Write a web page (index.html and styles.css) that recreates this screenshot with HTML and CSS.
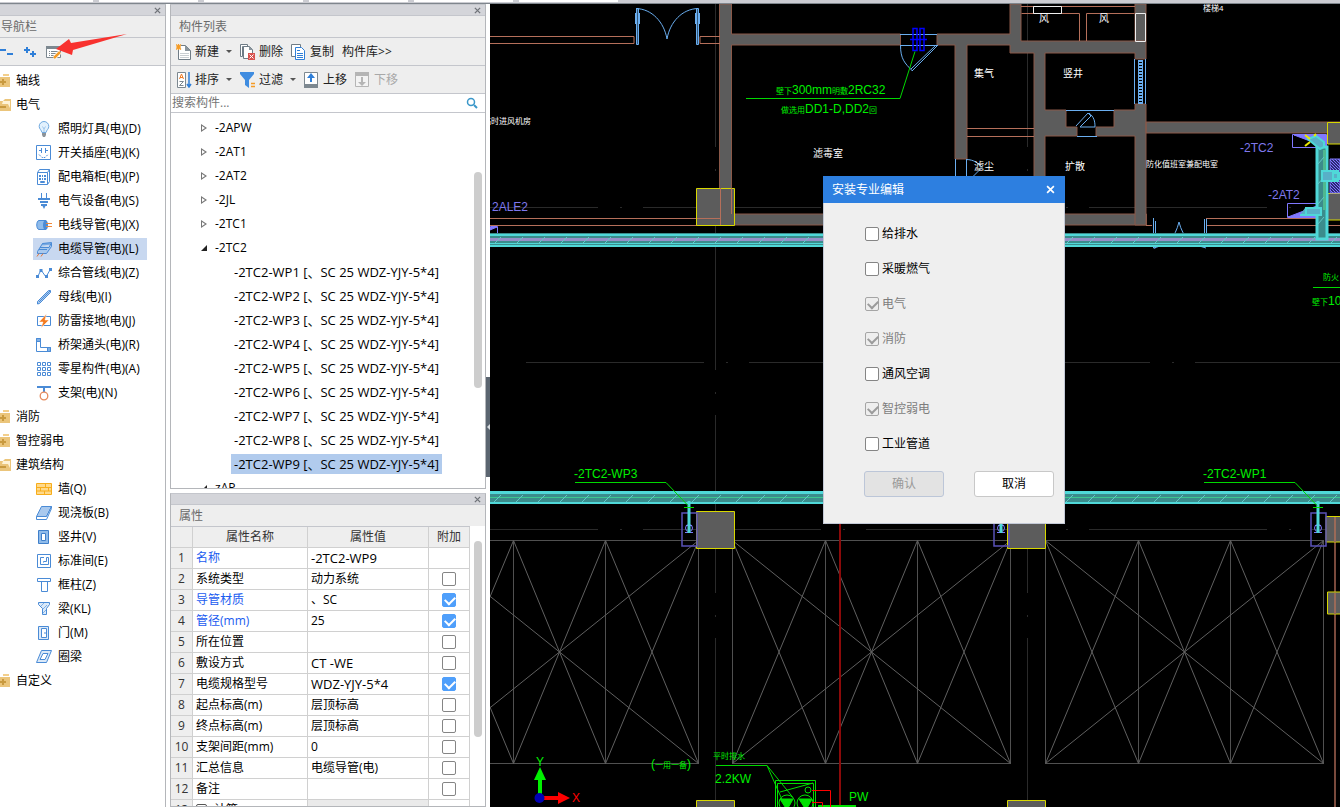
FILE: index.html
```
<!DOCTYPE html>
<html lang="zh-CN">

<head>
    <meta charset="UTF-8">
    <meta name="viewport" content="width=device-width, initial-scale=1.0">
    <title>安装专业编辑</title>
    <link rel="stylesheet" href="styles.css">
</head>

<body>

    <!-- icon set -->
    <svg class="defs" aria-hidden="true">
        <symbol id="i-folder" viewBox="0 0 16 16">
            <path fill="#f3cf8c" d="M8 1h6v2H8z" />
            <path fill="#ebc57b" d="M0 4h15v10H0z" />
            <path stroke="#c99a3f" stroke-width="2" d="M5 9h6M8 6v6" />
        </symbol>
        <symbol id="i-folder-open" viewBox="0 0 16 16">
            <path fill="#ebc57b" d="M0 4h8l2-2h6v12H0z" />
            <path fill="#fff3d6" d="M8 4h7v7l-2-4H7z" />
            <path stroke="#c99a3f" stroke-width="2" d="M5 10h6" />
        </symbol>
        <symbol id="i-lamp" viewBox="0 0 16 16">
            <path fill="#e2f1fd" stroke="#6ea8df" d="M8 .5a4.8 4.8 0 0 0-4.8 5C3.200 8 5.500 9 6 11.500h4C10.500 9 12.800 8 12.800 5.500A4.800 4.800 0 0 0 8 .5z" />
            <path fill="none" stroke="#9fc6ec" d="M6.500 5.500 8 8l1.500-2.500M8 8v3" />
            <path fill="#8c9399" d="M6 12h4v2l-1 2H7l-1-2z" />
        </symbol>
        <symbol id="i-socket" viewBox="0 0 16 16">
            <path fill="#fff" stroke="#4a8bd6" d="M.5.500h14v14H.5z" />
            <path fill="none" stroke="#4a8bd6" d="M3 5.500h2M5.500 3v5M9.500 3v5M10 5.500h2" />
            <path fill="none" stroke="#4a8bd6" stroke-dasharray="2 1" d="M3 9.500l3 3h3l3-3" />
        </symbol>
        <symbol id="i-box" viewBox="0 0 16 16">
            <path fill="#fff" stroke="#4a8bd6" d="M1.500 3.500h10v12h-10zM1.500 3.500l2-3h10v12l-2 3M11.500 3.500l2-3" />
            <path fill="#4a8bd6" d="M3 6h2v2H3zM6 6h1v2H6zM8 6h2v2H8zM3 9h2v2H3zM6 9h1v2H6zM8 9h2v2H8z" />
            <path fill="#fff" stroke="#4a8bd6" d="M4.500 12.500h4v1h-4z" />
        </symbol>
        <symbol id="i-device" viewBox="0 0 16 16">
            <path fill="none" stroke="#4a8bd6" d="M5.500 0v5M10.500 0v5" />
            <path stroke="#4a8bd6" stroke-width="2" d="M2 6h12M4 9h8M5 12h6" />
            <path fill="#4a8bd6" d="M6 12h4l-2 4z" />
        </symbol>
        <symbol id="i-wire" viewBox="0 0 16 16">
            <path fill="#8fbbea" stroke="#4a8bd6" d="M3 3.500h7v9H3C0 12.500 0 3.500 3 3.500z" />
            <ellipse cx="9.500" cy="8" rx="2.500" ry="4.500" fill="#4a8bd6" />
            <path stroke="#f08a3c" d="M10 6.500h6M10 9.500h6" />
        </symbol>
        <symbol id="i-tray" viewBox="0 0 16 16">
            <path fill="#a9c9ee" stroke="#4a8bd6" d="M1.500 10.500 6.500 2.500 15.500 1.500v4l-5 7h-9zM6 3h9M4 6.500h9l2-4M3 8.500h8" />
            <path stroke="#e0763a" d="M1 15.500l2-3M5 15.500l2-3" />
        </symbol>
        <symbol id="i-poly" viewBox="0 0 16 16">
            <path fill="none" stroke="#4a8bd6" d="M1.500 12 5 5l5 7 4.500-8" />
            <path fill="#4a8bd6" d="M0 10h3v3H0zM3.500 4h3v3h-3zM9 10h3v3H9zM13 3h3v3h-3z" />
        </symbol>
        <symbol id="i-bus" viewBox="0 0 16 16">
            <path fill="#a9c9ee" stroke="#4a8bd6" d="M1.500 12.500l11-11h2v2l-11 11-2 .5z" />
            <path stroke="#4a8bd6" d="M3 13 14 2" />
        </symbol>
        <symbol id="i-bolt" viewBox="0 0 16 16">
            <path fill="#fff" stroke="#4a8bd6" d="M1.500 3.500h13v9h-13z" />
            <path fill="#f47b20" stroke="#fff" stroke-width=".5" d="M10.500 1 3 9h4l-2 6 8-8H9z" />
        </symbol>
        <symbol id="i-elbow" viewBox="0 0 16 16">
            <path fill="#fff" stroke="#4a8bd6" d="M.5 1.500h4v9h10v4H.5z" />
            <path fill="#7fb0e6" stroke="#4a8bd6" d="M.5 1.500h4v3h-4zM11.500 10.500h3v4h-3z" />
        </symbol>
        <symbol id="i-grid" viewBox="0 0 16 16">
            <path fill="#fff" stroke="#4a8bd6" d="M1.500 1.500h3v3h-3zM6.500 1.500h3v3h-3zM11.500 1.500h3v3h-3zM1.500 6.500h3v3h-3zM6.500 6.500h3v3h-3zM11.500 6.500h3v3h-3zM1.500 11.500h3v3h-3zM6.500 11.500h3v3h-3zM11.500 11.500h3v3h-3z" />
        </symbol>
        <symbol id="i-hanger" viewBox="0 0 16 16">
            <path stroke="#4a8bd6" stroke-width="2" d="M1 2h14M8 2v5" />
            <circle cx="8" cy="11" r="3.800" fill="#fff" stroke="#e58a5c" stroke-width="1.300" />
        </symbol>
        <symbol id="i-wall" viewBox="0 0 16 16">
            <path fill="#ffd98a" stroke="#f7ad1b" d="M.5 2.500h15v11H.5z" />
            <path stroke="#f7ad1b" d="M0 6.500h16M0 10h16M9.500 3v3M4.500 7v3M12.500 7v3M8.500 10v3" />
        </symbol>
        <symbol id="i-slab" viewBox="0 0 16 16">
            <path fill="#a9c9ee" stroke="#4a8bd6" d="M5.500 1.500h10l-5 10h-10z" />
            <path fill="#fff" stroke="#4a8bd6" d="M.5 11.500h10l5-10v2l-5 11h-10z" />
        </symbol>
        <symbol id="i-shaft" viewBox="0 0 16 16">
            <path fill="#8fbbea" stroke="#3f7fca" d="M2.500 1.500h10v13h-10z" />
            <path fill="#fff" stroke="#3f7fca" d="M5.500 4.500h4v7h-4z" />
        </symbol>
        <symbol id="i-room" viewBox="0 0 16 16">
            <path fill="#fff" stroke="#4a8bd6" d="M1.500 1.500h13v13h-13zM8 4.500H4.500v7h8v-7h-2v4h-3v1" />
        </symbol>
        <symbol id="i-column" viewBox="0 0 16 16">
            <path fill="#fff" stroke="#4a8bd6" d="M1.500 1.500h13v3h-3v10h-6v-10h-4z" />
            <path stroke="#4a8bd6" d="M5 4.500h7" />
        </symbol>
        <symbol id="i-beam" viewBox="0 0 16 16">
            <path fill="#dbe9f8" stroke="#4a8bd6" d="M2.500 1.500h11v2l-3 4v6h-4v-6l-4-4z" />
            <path stroke="#7fb0e6" d="M5 5l3-3M7 8l4-4M7 12l3-3" />
        </symbol>
        <symbol id="i-door" viewBox="0 0 16 16">
            <path fill="#dbe9f8" stroke="#4a8bd6" d="M2.500 1.500h10v13h-10z" />
            <path fill="#fff" stroke="#4a8bd6" d="M5.500 3.500h5v9h-5zM8 8h2" />
        </symbol>
        <symbol id="i-ring" viewBox="0 0 16 16">
            <path fill="#dbe9f8" stroke="#4a8bd6" d="M5.500 1.500h10l-5 12h-10z" />
            <path fill="#fff" stroke="#4a8bd6" d="M7 4.500h5l-3 6H4z" />
        </symbol>
        <symbol id="i-minus" viewBox="0 0 16 16">
            <path stroke="#2f7fd8" stroke-width="2" d="M0 6h6M7 10h6" />
        </symbol>
        <symbol id="i-plus" viewBox="0 0 16 16">
            <path stroke="#2f7fd8" stroke-width="2" d="M1 6h6M4 3v6M7 10h6M10 7v6" />
        </symbol>
        <symbol id="i-edit" viewBox="0 0 16 16">
            <path fill="#fff" stroke="#7d8890" d="M.5 2.500h14v11H.5z" />
            <path fill="#7d8890" d="M0 2h15v3H0z" />
            <path stroke="#7d8890" stroke-dasharray="1 1 7 9" d="M3 7.500h10M3 9.500h10M3 11.500h10" />
            <path stroke="#fff" stroke-width="4" d="M8 14l6-6" />
            <path stroke="#f59b25" stroke-width="2.500" d="M8 14l6-6" />
        </symbol>
        <symbol id="i-new" viewBox="0 0 16 16">
            <path fill="#fff" stroke="#6f7c86" d="M2.500 1.500h7l5 5v9h-12z" />
            <path fill="#8a959d" d="M9 1l6 6H9z" />
            <path stroke="#c9ced2" d="M4 9.500h9M4 11.500h9M4 13.500h9" />
            <path stroke="#eee" stroke-width="6" d="M0 3h5" />
            <path stroke="#f59b25" stroke-width="1.200" d="M0 .5l5 5M5 .5l-5 5M2.500 0v6M0 3h5" />
        </symbol>
        <symbol id="i-del" viewBox="0 0 16 16">
            <path fill="#fff" stroke="#6f7c86" d="M.5.500h7v2h-5v10h-2z" />
            <path fill="#fff" stroke="#6f7c86" d="M3.500 2.500h6l3 3v9h-9z" />
            <path fill="#8a959d" d="M9 2l4 4H9z" />
            <path fill="#d9534f" d="M8 9h7v7H8z" />
            <path stroke="#fff" d="M9.500 10.500l4 4M13.500 10.500l-4 4" />
        </symbol>
        <symbol id="i-copy" viewBox="0 0 16 16">
            <path fill="#fff" stroke="#6f7c86" d="M.5.500h9v12h-9z" />
            <path fill="#fff" stroke="#2f7fd8" d="M4.500 3.500h6l3 3v9h-9z" />
            <path stroke="#2f7fd8" d="M6 6.500h3M6 9.500h6M6 11.500h6M6 13.500h6" />
        </symbol>
        <symbol id="i-sort" viewBox="0 0 16 16">
            <path fill="#fff" stroke="#7d8890" d="M1.500.500h8v15h-8z" />
            <path fill="none" stroke="#f07c25" d="M3.500 7l2-5 2 5M4 5.500h3" />
            <path fill="none" stroke="#7d8890" d="M3.500 9.500h4l-4 4h4" />
            <path fill="none" stroke="#2f7fd8" stroke-width="1.500" d="M13 0v14M11 12l2 3 2-3" />
        </symbol>
        <symbol id="i-filter" viewBox="0 0 16 16">
            <path fill="#3f8ce0" d="M0 0h14v2L9 8v8l-4-3V8L0 2z" />
            <path stroke="#f59b25" stroke-width="1.500" d="M11 11.500h4M11 14.500h4" />
        </symbol>
        <symbol id="i-up" viewBox="0 0 16 16">
            <path fill="#fff" stroke="#7d8890" d="M.5.500h13v14H.5z" />
            <path fill="#7d8890" d="M0 12h14v4H0z" />
            <path fill="#2f7fd8" d="M7 1l4 5H8v4H6V6H3z" />
        </symbol>
        <symbol id="i-down" viewBox="0 0 16 16">
            <path fill="#f3f3f3" stroke="#b5b5b5" d="M.5.500h13v14H.5z" />
            <path fill="#b5b5b5" d="M0 0h14v4H0zM7 14l4-4H8V5H6v5H3z" />
        </symbol>
        <symbol id="i-search" viewBox="0 0 12 12">
            <circle cx="5" cy="5" r="3.500" fill="#fff" stroke="#3a97c9" stroke-width="1.500" />
            <path stroke="#3a97c9" stroke-width="2" d="M8 8l3 3" />
        </symbol>
        <symbol id="i-close" viewBox="0 0 8 8">
            <path stroke="currentColor" stroke-width="1.500" d="M1 1l6 6M7 1 1 7" />
        </symbol>
    </svg>

    <div class="tabstrip">
        <span class="tab"></span>
        <span class="tab"></span>
        <span class="tab"></span>
        <span class="tab"></span>
        <span class="tab"></span>
        <span class="tab"></span>
    </div>

    <div class="workspace">

        <!-- navigation -->
        <aside class="panel nav">
            <div class="grip"><button class="close" aria-label="关闭"><svg><use href="#i-close" /></svg></button></div>
            <h2 class="title">导航栏</h2>
            <div class="tools">
                <button aria-label="折叠"><svg class="icon"><use href="#i-minus" /></svg></button>
                <button aria-label="展开"><svg class="icon"><use href="#i-plus" /></svg></button>
                <button aria-label="安装专业编辑"><svg class="icon"><use href="#i-edit" /></svg></button>
            </div>
            <svg class="pointer" viewBox="0 0 72 24">
                <path fill="#f8322f" d="M1 15 14 5l2 4 56-9-54 16-1 5z" />
            </svg>
            <ul class="nav-list">
                <li><a class="group" href="#"><svg class="icon"><use href="#i-folder" /></svg>轴线</a></li>
                <li><a class="group" href="#"><svg class="icon"><use href="#i-folder-open" /></svg>电气</a></li>
                <li><a class="item" href="#"><svg class="icon"><use href="#i-lamp" /></svg>照明灯具(电)(D)</a></li>
                <li><a class="item" href="#"><svg class="icon"><use href="#i-socket" /></svg>开关插座(电)(K)</a></li>
                <li><a class="item" href="#"><svg class="icon"><use href="#i-box" /></svg>配电箱柜(电)(P)</a></li>
                <li><a class="item" href="#"><svg class="icon"><use href="#i-device" /></svg>电气设备(电)(S)</a></li>
                <li><a class="item" href="#"><svg class="icon"><use href="#i-wire" /></svg>电线导管(电)(X)</a></li>
                <li><a class="item active" href="#"><svg class="icon"><use href="#i-tray" /></svg>电缆导管(电)(L)</a></li>
                <li><a class="item" href="#"><svg class="icon"><use href="#i-poly" /></svg>综合管线(电)(Z)</a></li>
                <li><a class="item" href="#"><svg class="icon"><use href="#i-bus" /></svg>母线(电)(I)</a></li>
                <li><a class="item" href="#"><svg class="icon"><use href="#i-bolt" /></svg>防雷接地(电)(J)</a></li>
                <li><a class="item" href="#"><svg class="icon"><use href="#i-elbow" /></svg>桥架通头(电)(R)</a></li>
                <li><a class="item" href="#"><svg class="icon"><use href="#i-grid" /></svg>零星构件(电)(A)</a></li>
                <li><a class="item" href="#"><svg class="icon"><use href="#i-hanger" /></svg>支架(电)(N)</a></li>
                <li><a class="group" href="#"><svg class="icon"><use href="#i-folder" /></svg>消防</a></li>
                <li><a class="group" href="#"><svg class="icon"><use href="#i-folder" /></svg>智控弱电</a></li>
                <li><a class="group" href="#"><svg class="icon"><use href="#i-folder-open" /></svg>建筑结构</a></li>
                <li><a class="item" href="#"><svg class="icon"><use href="#i-wall" /></svg>墙(Q)</a></li>
                <li><a class="item" href="#"><svg class="icon"><use href="#i-slab" /></svg>现浇板(B)</a></li>
                <li><a class="item" href="#"><svg class="icon"><use href="#i-shaft" /></svg>竖井(V)</a></li>
                <li><a class="item" href="#"><svg class="icon"><use href="#i-room" /></svg>标准间(E)</a></li>
                <li><a class="item" href="#"><svg class="icon"><use href="#i-column" /></svg>框柱(Z)</a></li>
                <li><a class="item" href="#"><svg class="icon"><use href="#i-beam" /></svg>梁(KL)</a></li>
                <li><a class="item" href="#"><svg class="icon"><use href="#i-door" /></svg>门(M)</a></li>
                <li><a class="item" href="#"><svg class="icon"><use href="#i-ring" /></svg>圈梁</a></li>
                <li><a class="group" href="#"><svg class="icon"><use href="#i-folder" /></svg>自定义</a></li>
            </ul>
        </aside>

        <div class="side">

            <!-- component list -->
            <section class="panel">
                <div class="grip"><button class="close" aria-label="关闭"><svg><use href="#i-close" /></svg></button></div>
                <h2 class="title">构件列表</h2>
                <div class="tools">
                    <button><svg class="icon"><use href="#i-new" /></svg>新建<i class="caret"></i></button>
                    <button><svg class="icon"><use href="#i-del" /></svg>删除</button>
                    <button><svg class="icon"><use href="#i-copy" /></svg>复制</button>
                    <button>构件库&gt;&gt;</button>
                </div>
                <div class="tools">
                    <button><svg class="icon"><use href="#i-sort" /></svg>排序<i class="caret"></i></button>
                    <button><svg class="icon"><use href="#i-filter" /></svg>过滤<i class="caret"></i></button>
                    <button><svg class="icon"><use href="#i-up" /></svg>上移</button>
                    <button disabled><svg class="icon"><use href="#i-down" /></svg>下移</button>
                </div>
                <div class="search">
                    <input type="text" aria-label="搜索构件" placeholder="搜索构件...">
                    <svg><use href="#i-search" /></svg>
                </div>
                <div class="tree-wrap">
                    <ul class="tree">
                        <li><a class="node" href="#">-2APW</a></li>
                        <li><a class="node" href="#">-2AT1</a></li>
                        <li><a class="node" href="#">-2AT2</a></li>
                        <li><a class="node" href="#">-2JL</a></li>
                        <li><a class="node" href="#">-2TC1</a></li>
                        <li><a class="node open" href="#">-2TC2</a></li>
                        <li><a class="leaf code" href="#">-2TC2-WP1 [、SC 25 WDZ-YJY-5*4]</a></li>
                        <li><a class="leaf code" href="#">-2TC2-WP2 [、SC 25 WDZ-YJY-5*4]</a></li>
                        <li><a class="leaf code" href="#">-2TC2-WP3 [、SC 25 WDZ-YJY-5*4]</a></li>
                        <li><a class="leaf code" href="#">-2TC2-WP4 [、SC 25 WDZ-YJY-5*4]</a></li>
                        <li><a class="leaf code" href="#">-2TC2-WP5 [、SC 25 WDZ-YJY-5*4]</a></li>
                        <li><a class="leaf code" href="#">-2TC2-WP6 [、SC 25 WDZ-YJY-5*4]</a></li>
                        <li><a class="leaf code" href="#">-2TC2-WP7 [、SC 25 WDZ-YJY-5*4]</a></li>
                        <li><a class="leaf code" href="#">-2TC2-WP8 [、SC 25 WDZ-YJY-5*4]</a></li>
                        <li><a class="leaf code active" href="#">-2TC2-WP9 [、SC 25 WDZ-YJY-5*4]</a></li>
                        <li><a class="node open" href="#">zAP</a></li>
                    </ul>
                    <div class="thumb tree-thumb"></div>
                </div>
            </section>

            <!-- properties -->
            <section class="panel">
                <div class="grip"><button class="close" aria-label="关闭"><svg><use href="#i-close" /></svg></button></div>
                <h2 class="title">属性</h2>
                <div class="props-wrap">
                    <table class="props">
                        <colgroup>
                            <col class="c-num">
                            <col class="c-name">
                            <col>
                            <col class="c-add">
                        </colgroup>
                        <thead>
                            <tr><th></th><th>属性名称</th><th>属性值</th><th>附加</th></tr>
                        </thead>
                        <tbody>
                            <tr><th>1</th><td class="key">名称</td><td class="code">-2TC2-WP9</td><td></td></tr>
                            <tr><th>2</th><td>系统类型</td><td>动力系统</td><td><input type="checkbox" aria-label="系统类型"></td></tr>
                            <tr><th>3</th><td class="key">导管材质</td><td>、SC</td><td><input type="checkbox" aria-label="导管材质" checked></td></tr>
                            <tr><th>4</th><td class="key">管径(mm)</td><td>25</td><td><input type="checkbox" aria-label="管径" checked></td></tr>
                            <tr><th>5</th><td>所在位置</td><td></td><td><input type="checkbox" aria-label="所在位置"></td></tr>
                            <tr><th>6</th><td>敷设方式</td><td class="code">CT -WE</td><td><input type="checkbox" aria-label="敷设方式"></td></tr>
                            <tr><th>7</th><td>电缆规格型号</td><td class="code">WDZ-YJY-5*4</td><td><input type="checkbox" aria-label="电缆规格型号" checked></td></tr>
                            <tr><th>8</th><td>起点标高(m)</td><td>层顶标高</td><td><input type="checkbox" aria-label="起点标高"></td></tr>
                            <tr><th>9</th><td>终点标高(m)</td><td>层顶标高</td><td><input type="checkbox" aria-label="终点标高"></td></tr>
                            <tr><th>10</th><td>支架间距(mm)</td><td>0</td><td><input type="checkbox" aria-label="支架间距"></td></tr>
                            <tr><th>11</th><td>汇总信息</td><td>电缆导管(电)</td><td><input type="checkbox" aria-label="汇总信息"></td></tr>
                            <tr><th>12</th><td>备注</td><td></td><td><input type="checkbox" aria-label="备注"></td></tr>
                            <tr><th>13</th><td><span class="fold"></span>计算</td><td class="blank"></td><td></td></tr>
                        </tbody>
                    </table>
                    <div class="thumb props-thumb"></div>
                </div>
            </section>
        </div>

        <div class="splitter"><button aria-label="收起"></button></div>

        <!-- drawing area -->
        <main class="canvas">
            <svg class="cad" viewBox="490 4 850 803" preserveAspectRatio="xMinYMin slice">
                <defs>
                    <g id="bay" fill="none" stroke="#606060">
                        <path stroke="#505050" d="M0 0h278v223H0zM93 0v223M185 0v223" />
                        <path d="M0 0l278 223M0 223 278 0M0 0l93 223L185 0l93 223M0 223 93 0l92 223L278 0" />
                    </g>
                    <g id="column">
                        <path fill="#5c5c5c" stroke="#d8d800" d="M-.5.500h38v37h-38z" />
                    </g>
                    <g id="outlet" fill="none">
                        <path stroke="#5a52b8" stroke-width="1.500" d="M-7 13H8v33H-7z" />
                        <circle cx="0" cy="28" r="3.500" stroke="#8078ff" />
                        <path stroke="#8078ff" d="M-4 32.500h8M-3 25.500h6" />
                        <path stroke="#4fd8d8" stroke-width="3" d="M0 1v32" />
                        <path stroke="#00e000" d="M-5 7.500H5" />
                    </g>
                    <pattern id="ticks" width="22" height="13" patternUnits="userSpaceOnUse" patternTransform="translate(493 491)">
                        <path fill="none" stroke="#62c8c8" d="M1 11l7-7" />
                    </pattern>
                    <pattern id="ticks-up" width="22" height="13" patternUnits="userSpaceOnUse" patternTransform="translate(493 233)">
                        <path fill="none" stroke="#62c8c8" d="M1 11l7-7" />
                    </pattern>
                    <pattern id="mesh" width="3" height="3" patternUnits="userSpaceOnUse">
                        <path fill="#2c2875" d="M0 0h3v3H0z" />
                        <path stroke="#8078ff" d="M0 0l3 3" />
                    </pattern>
                </defs>

                <!-- axis grid -->
                <g class="axis">
                    <path d="M420 207.500h920" />
                    <path d="M420 529.500h920" />
                    <path d="M526 362.500h814" />
                    <path d="M715.500-31v840" />
                    <path d="M1027.500-31v840" />
                </g>

                <!-- parking bays -->
                <use href="#bay" x="420.500" y="540.500" />
                <use href="#bay" x="732.500" y="540.500" />
                <use href="#bay" x="1045.500" y="540.500" />

                <!-- walls -->
                <g class="wall">
                    <path d="M719.500 4h12v30h169v11h-169v169h415v11h-427z" />
                    <path d="M937 34h73V4h11v37h125v18h-11v-6h-90v57h21v17h11v9h-32v89h-11V53h-24v-8h-43v114h-12V45h-18z" />
                    <path d="M1135 4h11v37h-11zM1135 104h11v121h-11v-89h-39v-9h18v-17h21zM1146 122h194v11h-194z" />
                </g>
                <g class="trim">
                    <path d="M490 36.500h144v7H490M720 36.500h-20v7h20M490 225.500h230" />
                    <path d="M967 128.500h67M967 136.500h67M1021 6.500h114M1079.500 41V13.500h-58M1086.500 41V13.500h48M490 218.500h230" />
                    <path d="M1146 225.500h6M1207 218.500h120M1207 225.500h133M1206.500 218v7" />
                    <path stroke="#7a4a3c" stroke-width="2" d="M1335 516v291" />
                </g>

                <!-- doors and windows -->
                <g class="opening">
                    <path fill="#33587a" d="M636.500 8.500h2v36h-2zM696.500 8.500h2v36h-2z" />
                    <path d="M635.500 13v11M639.500 13v11M695.500 13v11M699.500 13v11M636 8.500C652 9 664 22 667 39 670 22 682 9 698 8.500" />
                    <path d="M900 34.500h37M900.500 45c0 14 4 18 12 26M912 71l26-26M911 69l25-24M900 45.500h37" />
                    <path d="M955.500 159v30M966.500 159v30M966 159.500c8 0 13 4 16 8l-10 10" />
                    <path d="M1134.500 59v45M1145.500 59v45M1138.500 60v44M1142.500 60v44" />
                    <path stroke-width="3" stroke-dasharray="2 1" d="M1140.500 60v44" />
                    <path d="M1066 110.500h48M1077 136.500h20M1076 126l12-13 3 3-11 11h15c0-6-1-10-6-14" />
                    <path d="M1153.500 218v30h2v-27M1204.500 247v-28M1206.500 247v-28M1154 248c14-4 21-10 25-26 4 16 12 22 27 26" />
                </g>
                <path fill="none" stroke="#0000ff" stroke-width="1.500" d="M913 28.500h4v22h-4zM920 28.500h4v22h-4zM910 39.500h17" />
                <g fill="none" stroke="#eee">
                    <path d="M1033.500 6.500h28v7h-28zM1135.500 13.500h10v28h-10z" />
                </g>

                <!-- columns -->
                <use href="#column" x="697" y="188" />
                <path class="trim-over" d="M720.500 188v37M731.500 188v26M697 218.500h23" />
                <use href="#column" x="697" y="511" />
                <use href="#column" x="1008" y="511" />
                <use href="#column" x="697" y="800" />
                <use href="#column" x="1008" y="800" />
                <g fill="#5c5c5c" stroke="#d8d800">
                    <path d="M1327.500 122.500h20V144h-20zM1327.500 193.500h20V220h-20zM1326 516.500h20V542h-20zM1327.500 592h20v22h-20z" />
                </g>
                <path stroke="#9a6a58" stroke-width="2" d="M1335 517v25M1335 593v21" />

                <!-- distribution boxes -->
                <g stroke="#8078ff">
                    <path fill="none" d="M1292.500 134.500h34v13h-34zM1287.500 203.500h34v14h-34zM490.500 226.500h7v12" />
                    <path fill="#8078ff" d="M1294 135h32v12zM1288 217h34v-13zM490 227h7l-7 3z" />
                    <path fill="url(#mesh)" d="M1330 159h10v34h-10z" />
                </g>

                <!-- cable trays -->
                <g>
                    <path fill="#3b8c8c" d="M490 233h850v14H490zM490 491h850v13H490z" />
                    <path fill="#4fd8d8" d="M490 234h850v2H490zM490 243h850v1H490zM490 245h850v2H490zM490 491h850v3H490zM490 502h850v2H490z" />
                    <path fill="#968fc8" d="M490 238h850v3H490z" />
                    <path fill="#3cc890" d="M490 497h850v1H490z" />
                    <path fill="url(#ticks-up)" d="M490 233h850v13H490z" />
                    <path fill="url(#ticks)" d="M490 491h850v13H490z" />
                    <path fill="#3b8c8c" stroke="#4fd8d8" stroke-width="3" d="M1317 147h10v92h-10z" />
                    <path stroke="#4fb890" stroke-width="3" d="M1324.500 150v60" />
                    <path stroke="#62c8c8" d="M1318 164l6-7M1318 184l6-7M1318 204l6-7M1318 224l6-7" />
                    <path fill="#58b0c8" stroke="#4fd8d8" stroke-width="2" d="M1308 139l8-3 8 6v5l-4 2zM1305 208h16v7h-21M1306 208v7M1322 171h16v10h-16zM1333 173h7v6h-7z" />
                    <path stroke="#e8e800" stroke-width="2" d="M1305 135l5 4M1305 146l5-4M1314 136l2-2" />
                </g>

                <use href="#outlet" x="689" y="500" />
                <use href="#outlet" x="1001" y="500" />
                <use href="#outlet" x="1318" y="500" />

                <!-- leaders -->
                <g fill="none" stroke="#00d800">
                    <path d="M746 98.500h154l15-47M575 482.500h91l22 23M1204 482.500h91l22 23M716 765.500h51l26 32M767 765.500l15 34M1313 287.500h27" />
                </g>
                <path stroke="#8b0a0a" stroke-width="2" d="M840 523v284" />

                <!-- pumps -->
                <g fill="none" stroke="#00e000">
                    <path d="M775.500 780.500h40v30h-40zM777.500 783.500h36v30h-36zM780 792l33-9" />
                    <circle cx="787" cy="803" r="8" />
                    <circle cx="805" cy="803" r="8" />
                    <circle cx="808" cy="790" r="3" />
                    <path fill="#00e000" d="M780 799h13l-6 11zM799 799h13l-6 11z" />
                    <path stroke-width="2" d="M818 806h38" />
                </g>
                <path fill="none" stroke="#f00" d="M812 790.500h18.500V807M812 802.500h10.500v4" />

                <!-- origin marker -->
                <path stroke="#00f000" stroke-width="4" d="M540 796v-18" />
                <path fill="#00f000" d="M534 780h12l-6-13z" />
                <path stroke="#f00" stroke-width="4" d="M542 798h18" />
                <path fill="#f00" d="M558 792v12l12-6z" />
                <circle cx="539.500" cy="798" r="5" fill="#0000b4" />

                <g class="cad-text green">
                    <text x="776" y="94"><tspan class="cjk">壁下</tspan>300mm<tspan class="cjk">明敷</tspan>2RC32</text>
                    <text x="781" y="113"><tspan class="cjk">做选用</tspan>DD1-D,DD2<tspan class="cjk">回</tspan></text>
                    <text x="574" y="478">-2TC2-WP3</text>
                    <text x="1203" y="478">-2TC2-WP1</text>
                    <text x="715" y="783">2.2KW</text>
                    <text x="849" y="801">PW</text>
                    <text x="536" y="766">Y</text>
                    <text x="651" y="768">(<tspan class="cjk">一用一备</tspan>)</text>
                    <text x="1312" y="305"><tspan class="cjk">壁下</tspan>10</text>
                    <text class="cjk" x="713" y="759">平时排水</text>
                    <text class="cjk" x="1323" y="280">防火</text>
                </g>
                <g class="cad-text red">
                    <text x="572" y="802">X</text>
                </g>
                <g class="cad-text violet">
                    <text x="492" y="211">2ALE2</text>
                    <text x="1240" y="152">-2TC2</text>
                    <text x="1268" y="199">-2AT2</text>
                </g>
                <g class="cad-text room">
                    <text class="cjk" x="483" y="124">临时进风机房</text>
                    <text x="813" y="157">滤毒室</text>
                    <text x="974" y="77">集气</text>
                    <text x="1063" y="77">竖井</text>
                    <text x="974" y="170">滤尘</text>
                    <text x="1065" y="170">扩散</text>
                    <text class="cjk" x="1146" y="167">防化值班室兼配电室</text>
                    <text x="1039" y="22">风</text>
                    <text x="1099" y="22">风</text>
                    <text class="cjk" x="1203" y="11">楼梯4</text>
                </g>
            </svg>

            <form class="dialog">
                <div class="dialog-head">
                    <h1>安装专业编辑</h1>
                    <button type="button" aria-label="关闭"><svg><use href="#i-close" /></svg></button>
                </div>
                <div class="dialog-body">
                    <label><input type="checkbox">给排水</label>
                    <label><input type="checkbox">采暖燃气</label>
                    <label class="off"><input type="checkbox" checked disabled>电气</label>
                    <label class="off"><input type="checkbox" checked disabled>消防</label>
                    <label><input type="checkbox">通风空调</label>
                    <label class="off"><input type="checkbox" checked disabled>智控弱电</label>
                    <label><input type="checkbox">工业管道</label>
                </div>
                <div class="dialog-foot">
                    <button type="button" disabled>确认</button>
                    <button type="button">取消</button>
                </div>
            </form>
        </main>
    </div>

</body>

</html>
```

FILE: styles.css
```
* {
    box-sizing: border-box;
}

body {
    display: flex;
    flex-direction: column;
    height: 100vh;
    margin: 0;
    overflow: hidden;
    background-color: #fff;
    color: #000;
    font-family: "Open Sans", "Noto Sans CJK SC", sans-serif;
    font-size: 12px;
    line-height: 20px;
}

button,
input {
    font: inherit;
    color: inherit;
    margin: 0;
}

button {
    padding: 0;
    border: none;
    background: none;
}

ul {
    list-style: none;
    margin: 0;
    padding: 0;
}

a {
    color: inherit;
    text-decoration: none;
}

.defs {
    position: absolute;
    width: 0;
    height: 0;
}

.icon {
    flex: none;
    width: 16px;
    height: 16px;
}

.code {
    font-size: 13px;
}

/* top strip */
.tabstrip {
    display: flex;
    flex: none;
    gap: 6px;
    height: 4px;
    background-color: #cbccd2;
    border-bottom: 1px solid #7f868d;
}

.tab {
    width: 99px;
    height: 2px;
    background-color: #fff;
}

.tab:first-child {
    width: 93px;
}

.workspace {
    display: flex;
    flex: 1;
    min-height: 0;
}

/* panels */
.panel {
    display: flex;
    flex-direction: column;
    min-height: 0;
    overflow: hidden;
    border: 1px solid #b4b6ba;
    border-top-color: #c4c6cc;
    background-color: #fff;
}

.grip {
    display: flex;
    flex: none;
    justify-content: flex-end;
    align-items: center;
    height: 10px;
    padding-right: 4px;
    background-color: #d4d5da;
}

.close {
    width: 8px;
    height: 8px;
    line-height: 0;
    color: #6f7378;
}

.close svg {
    width: 7px;
    height: 7px;
}

.title {
    flex: none;
    height: 22px;
    margin: 0;
    padding: 0 8px;
    border-top: 1px solid #c4c6cc;
    background-color: #eee;
    color: #6a6a6a;
    font-size: 12px;
    font-weight: normal;
    line-height: 22px;
}

.tools {
    display: flex;
    flex: none;
    align-items: center;
    gap: 8px;
    height: 28px;
    padding: 0 5px;
    border-top: 1px solid #c4c6cc;
    background-color: #eee;
}

.tools button {
    display: flex;
    align-items: center;
    gap: 3px;
    color: #222;
}

.tools button:disabled {
    color: #a8a8a8;
}

.caret {
    margin-left: 4px;
    border: 3px solid transparent;
    border-top-color: #555;
    border-bottom: none;
}

/* navigation */
.nav {
    position: relative;
    width: 166px;
    margin-right: 4px;
    border-left: none;
    border-bottom: none;
}

.nav .title {
    padding-left: 1px;
}

.nav .tools {
    gap: 7px;
    padding: 0;
}

.pointer {
    position: absolute;
    top: 29px;
    left: 55px;
    width: 72px;
    height: 24px;
}

.nav-list {
    border-top: 1px solid #c4c6cc;
    padding-top: 3px;
}

.nav-list li {
    display: flex;
    align-items: center;
    height: 24px;
}

.group,
.item {
    display: flex;
    align-items: center;
    height: 22px;
}

.group {
    gap: 5px;
    margin-left: -5px;
}

.item {
    gap: 6px;
    margin-left: 33px;
    padding: 0 9px 0 3px;
}

.item.active {
    background-color: #c8d8f0;
}

/* list and properties */
.side {
    display: grid;
    grid-template-rows: 1fr 314px;
    gap: 4px;
    width: 316px;
    min-height: 0;
}

.search {
    display: flex;
    flex: none;
    align-items: center;
    height: 20px;
    padding-right: 7px;
    border: 1px solid #c4c6cc;
    border-width: 1px 0;
}

.search input {
    flex: 1;
    min-width: 0;
    height: 18px;
    padding: 0 1px;
    border: none;
    outline: none;
}

.search input::placeholder {
    color: #757575;
}

.search svg {
    width: 12px;
    height: 12px;
}

.tree-wrap,
.props-wrap {
    position: relative;
    flex: 1;
    min-height: 0;
    overflow: hidden;
}

.tree {
    padding-top: 3px;
}

.tree li {
    display: flex;
    align-items: center;
    height: 24px;
}

.node {
    display: flex;
    align-items: center;
    gap: 8px;
    margin-left: 30px;
}

.node::before {
    content: "";
    width: 6px;
    height: 8px;
    background-color: #777;
    clip-path: polygon(0 0, 100% 50%, 0 100%, 0 0, 1px 2px, 1px 6px, 4px 4px, 1px 2px);
}

.node.open::before {
    height: 6px;
    background-color: #222;
    clip-path: polygon(100% 0, 100% 100%, 0 100%);
}

.leaf {
    margin-left: 60px;
    padding: 0 3px;
}

.leaf.active {
    background-color: #b1cbed;
}

.thumb {
    position: absolute;
    right: 3px;
    width: 8px;
    border-radius: 4px;
    background-color: #cdcdcd;
}

.tree-thumb {
    top: 59px;
    height: 216px;
}

.props-thumb {
    top: 15px;
    height: 196px;
}

.props {
    width: calc(100% - 15px);
    table-layout: fixed;
    border-spacing: 0;
    border-top: 1px solid #c4c6cc;
}

.c-num {
    width: 22px;
}

.c-name {
    width: 115px;
}

.c-add {
    width: 41px;
}

.props th,
.props td {
    height: 21px;
    padding: 0 3px;
    border: 1px solid #d0d0d0;
    border-width: 0 1px 1px 0;
    line-height: 20px;
    white-space: nowrap;
    text-align: left;
}

.props th {
    padding: 0;
    background-color: #eee;
    color: #333;
    font-weight: normal;
    text-align: center;
}

.props td:last-child {
    padding: 0;
    text-align: center;
}

.props .key {
    color: #1a5cf0;
}

.props .blank {
    background-color: #eaeaea;
}

.fold {
    display: inline-block;
    width: 11px;
    height: 11px;
    margin-right: 7px;
    border: 1px solid #555;
    border-radius: 2px;
    vertical-align: -1px;
}

input[type="checkbox"] {
    appearance: none;
    display: block;
    flex: none;
    width: 14px;
    height: 14px;
    border: 1px solid #858585;
    border-radius: 2px;
    background-color: #fff;
}

.props input {
    margin: 0 auto;
}

input[type="checkbox"]:checked {
    border-color: #4f9ffb;
    background-color: #4f9ffb;
}

input[type="checkbox"]:checked::after {
    content: "";
    display: block;
    width: 8px;
    height: 5px;
    margin: 2px;
    border: 2px solid #fff;
    border-width: 0 0 2px 2px;
    transform: rotate(-45deg);
}

input[type="checkbox"]:disabled {
    border-color: #a5a5a5;
    background-color: #eee;
}

input[type="checkbox"]:disabled::after {
    border-color: #9b9b9b;
}

.splitter {
    display: flex;
    align-items: center;
    width: 4px;
}

.splitter button {
    width: 4px;
    height: 100px;
    margin-top: 43px;
    background-color: #5b6570;
}

.splitter button::before {
    content: "";
    display: block;
    border: 3px solid transparent;
    border-right-color: #d8dce0;
    border-left: none;
}

/* drawing */
.canvas {
    position: relative;
    flex: 1;
    min-width: 0;
    overflow: hidden;
    background-color: #000;
}

.cad {
    display: block;
    width: 100%;
    height: 100%;
}

.axis {
    fill: none;
    stroke: #2a2a2a;
    stroke-dasharray: 178 22 2 21;
}

.wall {
    fill: #5c5c5c;
    stroke: #8a5848;
}

.trim,
.trim-over {
    fill: none;
    stroke: #b56f5a;
}

.opening {
    fill: none;
    stroke: #6aaef0;
}

.cad-text {
    font-family: "Liberation Sans", "Noto Sans CJK SC", sans-serif;
    font-size: 12px;
}

.room {
    font-size: 10px;
}

.cad-text .cjk {
    font-size: 8px;
}

.green {
    fill: #00f000;
}

.red {
    fill: #f00;
}

.violet {
    fill: #7f78ec;
}

.room {
    fill: #fff;
}

/* dialog */
.dialog {
    position: absolute;
    top: 172px;
    left: 333px;
    width: 242px;
    border: 1px solid #c3c9d6;
    border-top: none;
    background-color: #efefef;
}

.dialog-head {
    display: flex;
    align-items: center;
    justify-content: space-between;
    height: 27px;
    margin: 0 -1px;
    padding: 0 10px 0 9px;
    background-color: #2d7fe0;
    color: #fff;
}

.dialog-head h1 {
    margin: 0;
    font-size: 12px;
    font-weight: normal;
}

.dialog-head svg {
    display: block;
    width: 9px;
    height: 9px;
}

.dialog-body {
    display: flex;
    flex-direction: column;
    align-items: flex-start;
    gap: 15px;
    padding: 21px 41px 17px;
}

.dialog-body label {
    display: flex;
    align-items: center;
    gap: 3px;
}

.dialog-body .off {
    color: #7d7d7d;
}

.dialog-foot {
    display: flex;
    justify-content: flex-end;
    gap: 30px;
    padding: 0 10px 26px;
}

.dialog-foot button {
    width: 80px;
    height: 26px;
    border: 1px solid #c8c8c8;
    border-radius: 3px;
    background-color: #fff;
}

.dialog-foot button:disabled {
    border-color: #bcc6d8;
    background-color: #e3e3e3;
    color: #999;
}
```
